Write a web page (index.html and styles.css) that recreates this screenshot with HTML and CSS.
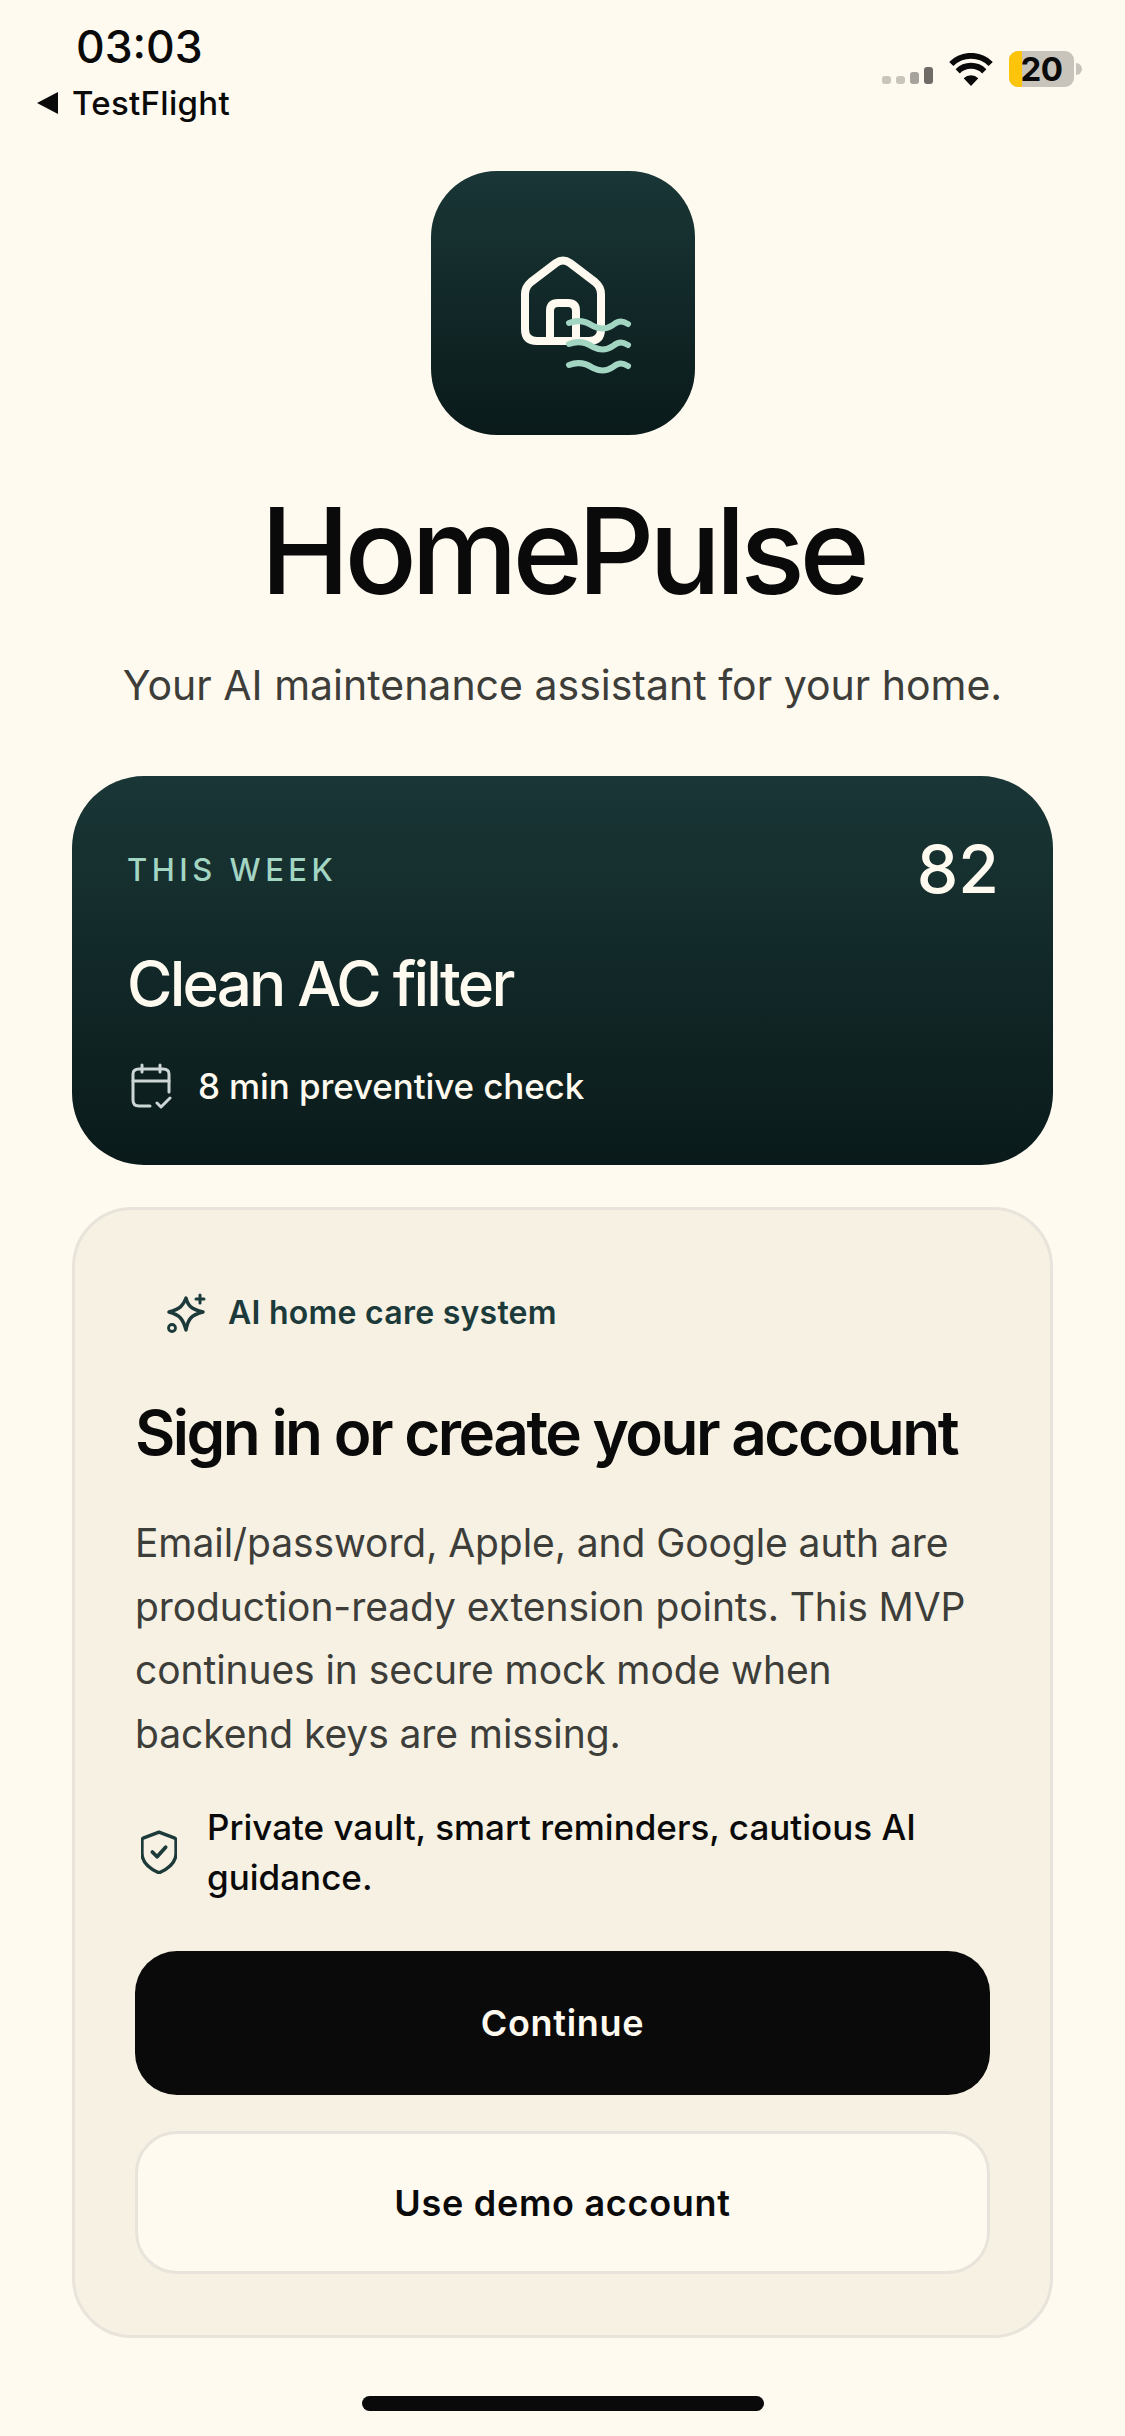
FILE: index.html
```html
<!DOCTYPE html>
<html lang="en">

<head>
    <meta charset="UTF-8">
    <meta name="viewport" content="width=device-width, initial-scale=1.0">
    <title>HomePulse</title>
    <link rel="stylesheet" href="styles.css">
</head>

<body>
    <div class="screen">
        <div class="status-bar">
            <div class="status-left">
                <div class="clock">03:03</div>
                <div class="back-link"><span class="back-arrow"></span>TestFlight</div>
            </div>
            <div class="status-right">
                <div class="signal">
                    <span class="bar bar-1"></span>
                    <span class="bar bar-2"></span>
                    <span class="bar bar-3"></span>
                    <span class="bar bar-4"></span>
                </div>
                <svg class="wifi" viewBox="0 0 48 36">
                    <path d="M24 36 L16 27.5 A11.5 11.5 0 0 1 32 27.5 Z" fill="#0a0a0a" />
                    <path d="M9.5 20 A20.5 20.5 0 0 1 38.5 20" fill="none" stroke="#0a0a0a" stroke-width="6.5" />
                    <path d="M2.5 12 A30.5 30.5 0 0 1 45.5 12" fill="none" stroke="#0a0a0a" stroke-width="6.5" />
                </svg>
                <div class="battery">
                    <div class="battery-body"><span class="battery-fill"></span><span class="battery-num">20</span></div>
                    <span class="battery-nub"></span>
                </div>
            </div>
        </div>

        <div class="logo">
            <svg viewBox="0 0 264 264" width="264" height="264">
                <path d="M94 123 Q94 116 100 111 L125 92 Q132 87 139 92 L164 111 Q170 116 170 123 V158 Q170 170 158 170 H106 Q94 170 94 158 Z" fill="none" stroke="#fffaf0" stroke-width="8" stroke-linejoin="round" />
                <path d="M119 170 V140 Q119 132 127 132 H137 Q145 132 145 140 V170" fill="none" stroke="#fffaf0" stroke-width="8" />
                <g fill="none" stroke="#a3d5c3" stroke-width="6" stroke-linecap="round">
                    <path d="M138 152 C148 148 156 151 162 155 C170 159 176 158 182 154 C188 149 192 150 197 153" />
                    <path d="M138 173 C148 169 156 172 162 176 C170 180 176 179 182 175 C188 170 192 171 197 174" />
                    <path d="M138 194 C148 190 156 193 162 197 C170 201 176 200 182 196 C188 191 192 192 197 195" />
                </g>
            </svg>
        </div>

        <h1 class="brand">HomePulse</h1>
        <p class="tagline">Your AI maintenance assistant for your home.</p>

        <div class="hero-card">
            <div class="hero-top">
                <span class="hero-label">THIS WEEK</span>
                <span class="hero-score">82</span>
            </div>
            <div class="hero-title">Clean AC filter</div>
            <div class="hero-meta">
                <svg class="hero-icon" viewBox="0 0 42 46">
                    <path d="M20 43 H9 Q3 43 3 37 V11 Q3 6 9 6 H33 Q39 6 39 11 V29" fill="none" stroke="#ccd6d4" stroke-width="3" stroke-linecap="round" />
                    <path d="M3 18 H39 M12 2 V9 M30 2 V9" fill="none" stroke="#ccd6d4" stroke-width="3" stroke-linecap="round" />
                    <path d="M27 40 L31 44 L40 35" fill="none" stroke="#ccd6d4" stroke-width="3" stroke-linecap="round" stroke-linejoin="round" />
                </svg>
                <span>8 min preventive check</span>
            </div>
        </div>

        <div class="auth-panel">
            <div class="auth-badge">
                <svg class="badge-icon" viewBox="0 0 40 40">
                    <path d="M19 5 C21 13 24 16 36 19 C24 22 21 26 19 37 C16 26 13 22 2 19 C13 16 16 13 19 5 Z" fill="none" stroke="#1c3a3a" stroke-width="3.4" stroke-linejoin="round" />
                    <path d="M33 2 V10 M29 6 H37" fill="none" stroke="#1c3a3a" stroke-width="3" stroke-linecap="round" />
                    <circle cx="5" cy="35" r="3.5" fill="none" stroke="#1c3a3a" stroke-width="2.8" />
                </svg>
                <span>AI home care system</span>
            </div>
            <h2 class="auth-title">Sign in or create your account</h2>
            <p class="auth-copy">Email/password, Apple, and Google auth are production-ready extension points. This MVP continues in secure mock mode when backend keys are missing.</p>
            <div class="auth-note">
                <svg class="note-icon" viewBox="0 0 38 46">
                    <path d="M19 2 L35 8 Q37 9 37 11 V24 C37 34 28 41 19 45 C10 41 1 34 1 24 V11 Q1 9 3 8 Z" fill="none" stroke="#1c3a3a" stroke-width="3.6" stroke-linejoin="round" />
                    <path d="M12 23 L17 28 L26 18" fill="none" stroke="#1c3a3a" stroke-width="4" stroke-linecap="round" stroke-linejoin="round" />
                </svg>
                <span>Private vault, smart reminders, cautious AI guidance.</span>
            </div>
            <button class="btn btn-primary">Continue</button>
            <button class="btn btn-secondary">Use demo account</button>
        </div>

        <div class="home-bar"></div>
    </div>
</body>

</html>
```

FILE: styles.css
```css
* {
    box-sizing: border-box;
}

body {
    margin: 0;
    font-family: Inter, "Liberation Sans", sans-serif;
    background: #fffaf0;
    color: #0a0a0a;
}

.screen {
    width: 1125px;
    height: 2436px;
    display: flex;
    flex-direction: column;
    align-items: center;
    overflow: hidden;
}

.status-bar {
    width: 100%;
    height: 171px;
    display: flex;
    justify-content: space-between;
    align-items: flex-start;
    padding: 20px 43px 0 37px;
}

.status-left {
    display: flex;
    flex-direction: column;
    align-items: flex-start;
}

.clock {
    font-size: 44.5px;
    font-weight: 550;
    line-height: 54px;
    margin-left: 39px;
}

.back-link {
    display: flex;
    align-items: center;
    font-size: 33px;
    font-weight: 500;
    line-height: 40px;
    letter-spacing: 0.3px;
    margin-top: 9px;
}

.back-arrow {
    width: 0;
    height: 0;
    border-top: 11px solid transparent;
    border-bottom: 11px solid transparent;
    border-right: 21px solid #0a0a0a;
    margin-right: 14px;
}

.status-right {
    display: flex;
    align-items: center;
    gap: 16px;
    margin-top: 31px;
}

.signal {
    display: flex;
    align-items: flex-end;
    gap: 5px;
    height: 17px;
    margin-top: 13px;
}

.bar {
    width: 9px;
    border-radius: 3px;
    background: #c9c5bc;
    height: 8px;
}

.bar-3 {
    height: 12px;
    background: #a6a39c;
}

.bar-4 {
    height: 17px;
    background: #6f6c67;
}

.wifi {
    width: 44px;
    height: 33px;
}

.battery {
    display: flex;
    align-items: center;
}

.battery-body {
    position: relative;
    width: 65px;
    height: 36px;
    border-radius: 9px;
    background: #c8c4bb;
    display: flex;
    align-items: center;
    justify-content: center;
}

.battery-fill {
    position: absolute;
    left: 0;
    top: 0;
    bottom: 0;
    width: 13px;
    border-radius: 9px 0 0 9px;
    background: #fcc40a;
}

.battery-num {
    position: relative;
    font-size: 33px;
    font-weight: 700;
    line-height: 36px;
    letter-spacing: -0.5px;
}

.battery-nub {
    width: 6px;
    height: 12px;
    border-radius: 0 6px 6px 0;
    background: #c8c4bb;
    margin-left: 2px;
}

.logo {
    width: 264px;
    height: 264px;
    flex-shrink: 0;
    border-radius: 66px;
    background: linear-gradient(#1a3636, #0a1a1a);
}

.logo svg {
    display: block;
}

.brand {
    margin: 46px 0 0;
    font-size: 120px;
    font-weight: 500;
    line-height: 140px;
    letter-spacing: -5.5px;
}

.tagline {
    margin: 39px 0 0;
    font-size: 41px;
    line-height: 50px;
    color: #3d3d3a;
}

.hero-card {
    width: 981px;
    height: 389px;
    margin-top: 66px;
    flex-shrink: 0;
    padding: 60px 54px 0 55px;
    border-radius: 72px;
    background: linear-gradient(#1a3636, #0a1a1a);
    color: #fffaf0;
}

.hero-top {
    display: flex;
    justify-content: space-between;
    align-items: center;
    height: 66px;
}

.hero-label {
    font-size: 31px;
    font-weight: 500;
    letter-spacing: 4.5px;
    color: #a3d5c3;
}

.hero-score {
    font-size: 66px;
    font-weight: 500;
    line-height: 66px;
}

.hero-title {
    margin-top: 44px;
    font-size: 62px;
    font-weight: 500;
    line-height: 76px;
    letter-spacing: -2.8px;
}

.hero-meta {
    display: flex;
    align-items: center;
    gap: 26px;
    margin-top: 41px;
    padding-left: 3px;
    font-size: 35px;
    font-weight: 500;
    line-height: 46px;
    letter-spacing: -0.12px;
}

.hero-icon {
    width: 42px;
    height: 46px;
}

.auth-panel {
    width: 981px;
    height: 1131px;
    margin-top: 42px;
    flex-shrink: 0;
    padding: 81px 60px 0;
    border: 3px solid #e8e4dc;
    border-radius: 60px;
    background: #f6f1e2;
}

.auth-badge {
    display: flex;
    align-items: center;
    gap: 21px;
    padding-left: 32px;
    font-size: 32px;
    font-weight: 600;
    line-height: 44px;
    letter-spacing: 0.25px;
    color: #1c3a3a;
}

.badge-icon {
    width: 40px;
    height: 40px;
}

.auth-title {
    margin: 59px 0 0;
    font-size: 62px;
    font-weight: 600;
    line-height: 78px;
    letter-spacing: -2.5px;
}

.auth-copy {
    margin: 39px 0 0;
    font-size: 39px;
    line-height: 63.5px;
    letter-spacing: -0.08px;
    color: #3d3d3a;
}

.auth-note {
    display: flex;
    align-items: center;
    gap: 30px;
    margin-top: 37px;
    padding-left: 6px;
    font-size: 35px;
    font-weight: 500;
    line-height: 50px;
}

.note-icon {
    width: 36px;
    height: 44px;
    flex-shrink: 0;
}

.btn {
    display: block;
    width: 100%;
    height: 144px;
    border-radius: 42px;
    font-family: inherit;
    font-size: 36px;
    font-weight: 600;
    letter-spacing: 0.7px;
}

.btn-primary {
    margin-top: 49px;
    border: none;
    background: #0a0a0a;
    color: #fffaf0;
}

.btn-secondary {
    height: 143px;
    margin-top: 36px;
    border: 3px solid #e8e4dc;
    background: #fffaf0;
    color: #0a0a0a;
}

.home-bar {
    width: 402px;
    height: 15px;
    margin-top: 58px;
    flex-shrink: 0;
    border-radius: 8px;
    background: #0a0a0a;
}
```
